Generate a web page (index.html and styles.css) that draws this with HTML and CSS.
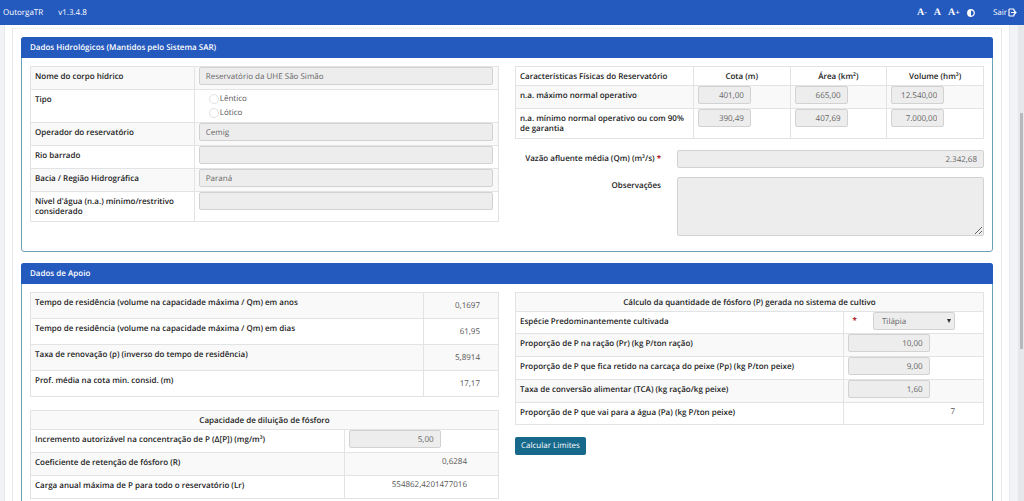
FILE: index.html
```html
<!DOCTYPE html>
<html lang="pt-BR">
<head>
<meta charset="utf-8">
<title>OutorgaTR</title>
<link rel="stylesheet" href="styles.css">
</head>
<body>
<header class="topbar">
  <span class="brand">OutorgaTR</span>
  <span class="version">v1.3.4.8</span>
  <nav class="tools">
    <button type="button" class="tool"><b>A</b>-</button>
    <button type="button" class="tool"><b>A</b></button>
    <button type="button" class="tool"><b>A</b>+</button>
    <button type="button" class="tool" aria-label="Contraste"><svg width="8" height="8" viewBox="0 0 16 16"><circle cx="8" cy="8" r="6.5" fill="none" stroke="currentColor" stroke-width="2.6"/><path d="M8 1.5a6.5 6.5 0 0 0 0 13z" fill="currentColor"/></svg></button>
    <a class="exit" href="#">Sair<svg width="9" height="9" viewBox="0 0 18 18" fill="none" stroke="currentColor" stroke-width="2.4"><path d="M12 6V3.500Q12 2 10.500 2H3.500Q2 2 2 3.500v11Q2 16 3.500 16h7q1.500 0 1.500-1.500V12M6 9h9M12.500 5.500 16 9l-3.500 3.500"/></svg></a>
  </nav>
</header>
<div class="view">
<main class="page">
 <div class="sheet">
  <section class="panel">
    <h2 class="panel-head">Dados Hidrológicos (Mantidos pelo Sistema SAR)</h2>
    <div class="cols">
      <div class="col">
        <table class="grid">
          <colgroup><col class="w35"><col></colgroup>
          <tr><th><label for="corpo">Nome do corpo hídrico</label></th><td><input id="corpo" type="text" value="Reservatório da UHE São Simão" disabled></td></tr>
          <tr><th>Tipo</th><td class="radios"><label><input type="radio" name="tipo" disabled>Lêntico</label><label><input type="radio" name="tipo" disabled>Lótico</label></td></tr>
          <tr><th><label for="oper">Operador do reservatório</label></th><td><input id="oper" type="text" value="Cemig" disabled></td></tr>
          <tr><th><label for="rio">Rio barrado</label></th><td><input id="rio" type="text" disabled></td></tr>
          <tr><th><label for="bacia">Bacia / Região Hidrográfica</label></th><td><input id="bacia" type="text" value="Paraná" disabled></td></tr>
          <tr><th><label for="nivel">Nível d'água (n.a.) mínimo/restritivo considerado</label></th><td><input id="nivel" type="text" disabled></td></tr>
        </table>
      </div>
      <div class="col">
        <table class="grid even">
          <colgroup><col class="w38"><col><col><col></colgroup>
          <tr class="head"><th>Características Físicas do Reservatório</th><th class="mid">Cota (m)</th><th class="mid">Área (km²)</th><th class="mid">Volume (hm³)</th></tr>
          <tr><th>n.a. máximo normal operativo</th><td><input class="num small" type="text" value="401,00" aria-label="Cota máxima" disabled></td><td><input class="num small" type="text" value="665,00" aria-label="Área máxima" disabled></td><td><input class="num small" type="text" value="12.540,00" aria-label="Volume máximo" disabled></td></tr>
          <tr><th>n.a. mínimo normal operativo ou com 90% de garantia</th><td><input class="num small" type="text" value="390,49" aria-label="Cota mínima" disabled></td><td><input class="num small" type="text" value="407,69" aria-label="Área mínima" disabled></td><td><input class="num small" type="text" value="7.000,00" aria-label="Volume mínimo" disabled></td></tr>
        </table>
        <div class="form">
          <label for="vazao">Vazão afluente média (Qm) (m³/s) <span class="req">*</span></label>
          <input id="vazao" class="num" type="text" value="2.342,68" disabled>
          <label for="obs">Observações</label>
          <textarea id="obs" disabled></textarea>
        </div>
      </div>
    </div>
  </section>
  <section class="panel">
    <h2 class="panel-head">Dados de Apoio</h2>
    <div class="cols">
      <div class="col">
        <table class="grid tall">
          <colgroup><col class="w84"><col></colgroup>
          <tr><th>Tempo de residência (volume na capacidade máxima / Qm) em anos</th><td>0,1697</td></tr>
          <tr><th>Tempo de residência (volume na capacidade máxima / Qm) em dias</th><td>61,95</td></tr>
          <tr><th>Taxa de renovação (ρ) (inverso do tempo de residência)</th><td>5,8914</td></tr>
          <tr><th>Prof. média na cota min. consid. (m)</th><td>17,17</td></tr>
        </table>
        <table class="grid spaced">
          <colgroup><col class="w67"><col></colgroup>
          <tr class="head"><th class="mid" colspan="2">Capacidade de diluição de fósforo</th></tr>
          <tr><th><label for="incr">Incremento autorizável na concentração de P (Δ[P]) (mg/m³)</label></th><td><input id="incr" class="num wide" type="text" value="5,00" disabled></td></tr>
          <tr><th>Coeficiente de retenção de fósforo (R)</th><td class="val">0,6284</td></tr>
          <tr><th>Carga anual máxima de P para todo o reservatório (Lr)</th><td class="val">554862,4201477016</td></tr>
        </table>
      </div>
      <div class="col">
        <table class="grid">
          <colgroup><col class="w70"><col></colgroup>
          <tr class="head"><th class="mid" colspan="2">Cálculo da quantidade de fósforo (P) gerada no sistema de cultivo</th></tr>
          <tr class="short"><th><label for="especie">Espécie Predominantemente cultivada</label></th><td><div class="pick"><span class="req">*</span><span class="select"><select id="especie" disabled><option>Tilápia</option></select></span></div></td></tr>
          <tr><th><label for="pr">Proporção de P na ração (Pr) (kg P/ton ração)</label></th><td><input id="pr" class="num mid-in" type="text" value="10,00" disabled></td></tr>
          <tr><th><label for="pp">Proporção de P que fica retido na carcaça do peixe (Pp) (kg P/ton peixe)</label></th><td><input id="pp" class="num mid-in" type="text" value="9,00" disabled></td></tr>
          <tr><th><label for="tca">Taxa de conversão alimentar (TCA) (kg ração/kg peixe)</label></th><td><input id="tca" class="num mid-in" type="text" value="1,60" disabled></td></tr>
          <tr class="short"><th>Proporção de P que vai para a água (Pa) (kg P/ton peixe)</th><td class="val">7</td></tr>
        </table>
        <button type="button" class="calc">Calcular Limites</button>
      </div>
    </div>
  </section>
 </div>
</main>
<div class="scroll"><div class="thumb"></div></div>
</div>
</body>
</html>
```
FILE: styles.css
```css
* { box-sizing: border-box; }
body {
  margin: 0;
  height: 100vh;
  overflow: hidden;
  display: flex;
  flex-direction: column;
  background: #f1f3f6;
  color: #222;
  font: 8px/10px "Open Sans", sans-serif;
  text-rendering: geometricPrecision;
}
input, select, textarea, button { font: inherit; color: inherit; margin: 0; text-rendering: inherit; }
.topbar {
  flex: none;
  height: 25px;
  padding: 0 7px 0 3px;
  display: flex;
  align-items: center;
  background: #2459bd;
  color: #fff;
}
.version { margin-left: 15px; }
.tools { margin-left: auto; display: flex; align-items: center; gap: 7px; }
.tool { display: flex; align-items: center; padding: 0; border: 0; background: none; color: #fff; }
.tool b { font: bold 10px/10px "Liberation Serif", serif; }
.exit { margin-left: 11px; display: flex; align-items: center; gap: 1px; color: #fff; text-decoration: none; }

.view { flex: 1; min-height: 0; display: flex; }
.page {
  flex: 1;
  min-width: 0;
  margin: 0 8px 0 4px;
  padding: 3px 7px 0;
  background: #fff;
  border: solid #e8eaed;
  border-width: 0 1px;
}
.sheet {
  padding: 8px 8px 0;
  min-height: 100%;
  border: 1px solid #e8e8e8;
  border-top-style: dotted;
  display: flex;
  flex-direction: column;
  gap: 11px;
}
.scroll { flex: none; width: 6px; padding: 88px 1px 0 2px; background: #e6e7ea; }
.thumb { height: 236px; background: #b9b9bb; }

.panel { border: 1px solid #6ba2ba; border-radius: 3px; padding-bottom: 15px; }
.panel-head {
  margin: -1px -1px 0;
  padding: 6px 9px 5px;
  border-radius: 3px 3px 0 0;
  background: #2459bd;
  color: #fff;
  font-size: 8px;
  line-height: 10px;
  font-weight: 600;
}
.cols { display: grid; grid-template-columns: 1fr 1fr; gap: 16px; padding: 8px 8px 0; }

.grid { width: 100%; table-layout: fixed; border-collapse: collapse; }
.grid th, .grid td { border: 1px solid #e2e3e5; vertical-align: top; }
.grid th { padding: 5px 4px 4px; text-align: left; font-weight: 600; }
.grid td { padding: 0 5px 4px 4px; }
.grid tr { height: 23px; }
.grid tr.head { height: 19px; }
.grid tr.head th { padding-bottom: 3px; }
.grid tr.short { height: 22px; }
.grid tr.short td { padding-bottom: 3px; }
.grid .mid { text-align: center; }
.grid tr:nth-child(odd) { background: #f9f9f9; }
.grid.even tr:nth-child(odd) { background: #fff; }
.grid.even tr:nth-child(even) { background: #f9f9f9; }
.spaced { margin-top: 13px; }
.w35 { width: 35%; }
.w38 { width: 38%; }
.w84 { width: 84%; }
.w67 { width: 67%; }
.w70 { width: 70%; }

.grid.tall tr { height: 26px; }
.grid.tall td { padding: 8px 18px 0; text-align: right; color: #555; }
.grid td.val { padding: 4px 31px 4px 4px; text-align: right; color: #555; }
.grid .short td.val { padding: 4px 28px 3px 4px; }

input[type="text"], textarea, select {
  display: block;
  width: 100%;
  height: 18px;
  padding: 0 6px;
  border: 1px solid #d2d2d2;
  border-radius: 2px;
  background: #ededed;
  color: #666;
  opacity: 1;
}
input.num { text-align: right; }
.grid input.small { width: 53px; }
.grid input.wide { width: 92px; }
.grid input.mid-in { width: 82px; }

.grid td.radios { padding: 2px 14px; color: #555; }
.radios label { display: flex; align-items: center; gap: 1px; height: 14px; }
.radios input {
  appearance: none;
  width: 10px;
  height: 10px;
  border: 1px solid #e2e2e2;
  border-radius: 50%;
  background: #fff;
}

.form {
  display: grid;
  grid-template-columns: 146px 1fr;
  gap: 9px 16px;
  margin-top: 11px;
}
.form label { padding-top: 4px; text-align: right; font-weight: 600; }
.form textarea { height: 59px; }
.req { color: #b3202c; font-weight: 700; }

.pick { display: flex; gap: 16px; padding-left: 5px; line-height: 18px; }
.select { position: relative; width: 82px; }
.select::after {
  content: "";
  position: absolute;
  right: 4px;
  top: 7px;
  border: solid transparent;
  border-width: 4px 2px 0;
  border-top-color: #333;
}
select { appearance: none; padding: 0 8px; }
.calc {
  margin-top: 12px;
  padding: 4px 6px;
  border: 0;
  border-radius: 2px;
  background: #17698c;
  color: #fff;
}
```
